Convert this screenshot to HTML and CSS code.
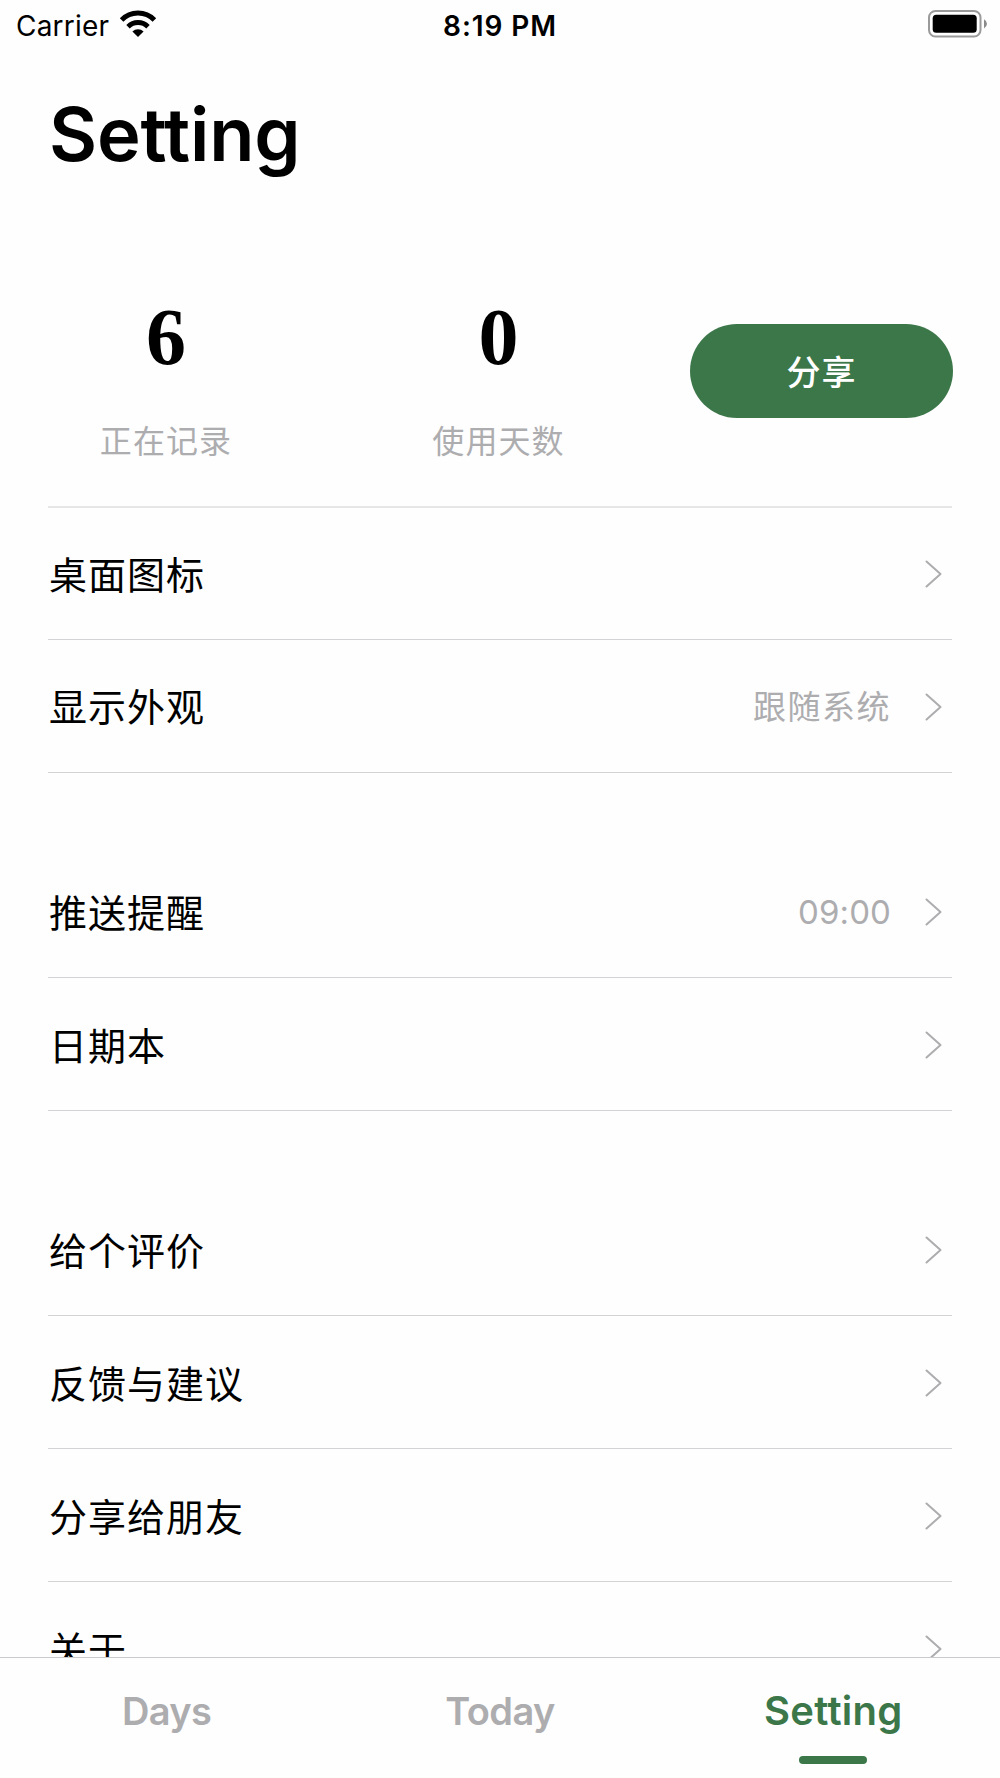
FILE: index.html
```html
<!DOCTYPE html>
<html lang="zh-CN">
<head>
<meta charset="utf-8">
<title>Setting</title>
<link rel="stylesheet" href="styles.css">
</head>
<body>
<svg class="sprite" aria-hidden="true">
  <symbol id="chevron" viewBox="0 0 18 30"><path d="M1.5 2.5 15.5 15 1.5 27.5" fill="none" stroke="#adadb0" stroke-width="2" stroke-linecap="round" stroke-linejoin="round"/></symbol>
</svg>
<div class="app">
  <header class="status">
    <div class="status-left">
      <span class="carrier">Carrier</span>
      <svg class="wifi" width="38" height="28" viewBox="0 0 38 28">
        <path d="M2.6 9.9A22.8 22.8 0 0 1 35.4 9.9" fill="none" stroke="#000" stroke-width="5"/>
        <path d="M9 16.7A14 14 0 0 1 29 16.7" fill="none" stroke="#000" stroke-width="4.8"/>
        <path d="M13.4 21.4A8.2 8.2 0 0 1 24.6 21.4L19 27Z"/>
      </svg>
    </div>
    <span class="clock">8:19 PM</span>
    <svg class="battery" width="60" height="28" viewBox="0 0 60 28">
      <rect x="1" y="1" width="51.5" height="25.5" rx="6.5" fill="none" stroke="#9a9a9a" stroke-width="2"/>
      <rect x="4.7" y="4.7" width="44" height="18" rx="3.5"/>
      <path d="M56 9.2Q59 11 59 13.8T56 18.4Z" fill="#8a8a8a"/>
    </svg>
  </header>
  <main class="content">
    <h1 class="title">Setting</h1>
    <section class="stats">
      <div class="stat"><b class="stat-number">6</b><span class="stat-label">正在记录</span></div>
      <div class="stat"><b class="stat-number">0</b><span class="stat-label">使用天数</span></div>
      <button class="share">分享</button>
    </section>
    <ul class="group">
      <li class="row"><span class="name">桌面图标</span><svg class="chevron"><use href="#chevron"/></svg></li>
      <li class="row"><span class="name">显示外观</span><span class="value">跟随系统</span><svg class="chevron"><use href="#chevron"/></svg></li>
    </ul>
    <ul class="group">
      <li class="row"><span class="name">推送提醒</span><span class="value time">09:00</span><svg class="chevron"><use href="#chevron"/></svg></li>
      <li class="row"><span class="name">日期本</span><svg class="chevron"><use href="#chevron"/></svg></li>
    </ul>
    <ul class="group">
      <li class="row"><span class="name">给个评价</span><svg class="chevron"><use href="#chevron"/></svg></li>
      <li class="row"><span class="name">反馈与建议</span><svg class="chevron"><use href="#chevron"/></svg></li>
      <li class="row"><span class="name">分享给朋友</span><svg class="chevron"><use href="#chevron"/></svg></li>
      <li class="row"><span class="name">关于</span><svg class="chevron"><use href="#chevron"/></svg></li>
    </ul>
  </main>
  <nav class="tabs">
    <a class="tab">Days</a>
    <a class="tab">Today</a>
    <a class="tab active">Setting</a>
  </nav>
</div>
</body>
</html>
```
FILE: styles.css
```css
* { box-sizing: border-box; }
body {
  margin: 0;
  background: #fefefe;
  color: #000;
  font-family: Inter, "Noto Sans CJK SC", sans-serif;
}
.sprite { display: none; }
.app {
  display: flex;
  flex-direction: column;
  width: 1000px;
  height: 1778px;
  overflow: hidden;
}
.status {
  display: grid;
  grid-template-columns: 1fr auto 1fr;
  align-items: center;
  flex: none;
  height: 52px;
  padding: 0 12px 0 16px;
}
.status-left { display: flex; align-items: center; gap: 10px; }
.carrier { font-size: 28px; letter-spacing: 0.2px; }
.wifi { margin-top: -4px; }
.clock { margin-right: 4px; font-size: 28px; font-weight: 600; letter-spacing: 0.9px; }
.battery { justify-self: end; margin-top: -4px; }
.content {
  flex: 1;
  min-height: 0;
  overflow: hidden;
  padding: 0 48px;
}
.title {
  margin: 34px 0 0 1px;
  font-size: 74px;
  line-height: 96px;
  font-weight: 600;
  letter-spacing: -0.2px;
}
.stats {
  display: grid;
  grid-template-columns: 236px 429px 1fr;
  height: 324px;
  padding-top: 109px;
}
.stat { display: flex; flex-direction: column; align-items: center; }
.stat-number {
  font-family: "Liberation Serif", serif;
  font-size: 80px;
  line-height: 92px;
}
.stat-label {
  margin-top: 36px;
  font-size: 32px;
  line-height: 46px;
  color: #adadb0;
  letter-spacing: 1.1px;
}
.share {
  width: 263px;
  height: 94px;
  margin: 33px 0 0 -23px;
  padding: 0 0 2px;
  border: 0;
  border-radius: 47px;
  background: #3c774a;
  color: #fff;
  font: 500 34px "Noto Sans CJK SC", sans-serif;
  letter-spacing: 1px;
}
.group { margin: 0 0 72.6px; padding: 0; list-style: none; }
.row {
  display: flex;
  align-items: center;
  height: 132.85px;
  padding: 2px 9px 0 0;
  border-bottom: 1px solid #d3d3d5;
}
.stats + .group { border-top: 2px solid #e6e6e7; }
.stats + .group .row:first-child { height: 131.85px; }
.name { flex: 1; padding: 0 0 4px 1px; font-size: 38px; letter-spacing: 1px; }
.value { padding-bottom: 4px; font-size: 33px; letter-spacing: 1.5px; color: #adadb0; }
.time { padding-bottom: 0; letter-spacing: 0.1px; }
.chevron { width: 18px; height: 30px; margin-left: 34px; }
.tabs {
  display: grid;
  grid-template-columns: repeat(3, 1fr);
  flex: none;
  height: 121px;
  border-top: 1px solid #cacacc;
}
.tab {
  display: flex;
  flex-direction: column;
  align-items: center;
  padding-top: 29px;
  font-size: 38px;
  line-height: 48px;
  font-weight: 600;
  letter-spacing: -0.6px;
  color: #adadb0;
}
.active { color: #3c774a; font-size: 40px; letter-spacing: 0.3px; }
.active::after {
  content: "";
  width: 68px;
  height: 8px;
  margin-top: 21px;
  border-radius: 4px;
  background: #3c774a;
}
```
